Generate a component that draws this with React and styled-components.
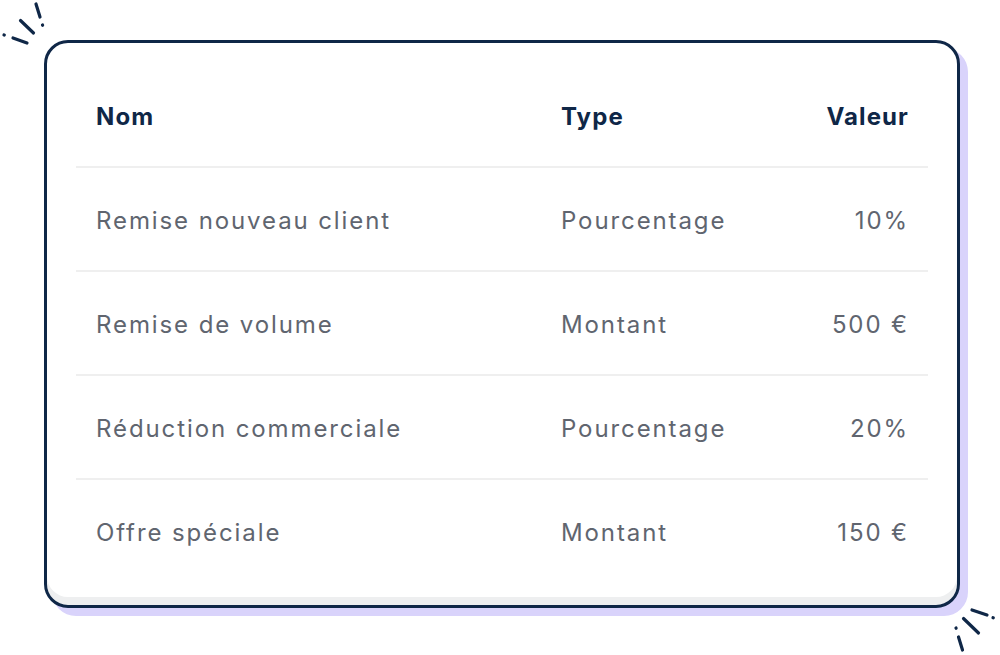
import React from 'react';
import styled, { createGlobalStyle } from 'styled-components';

const GlobalStyle = createGlobalStyle`
  body {
    margin: 0;
    background: #ffffff;
    font-family: Inter, 'Noto Sans', sans-serif;
  }
`;

const Page = styled.div`
  position: relative;
  width: 1000px;
  height: 655px;
  padding: 40px 0 0 44px;
  box-sizing: border-box;
`;

const Card = styled.div`
  width: 916px;
  box-sizing: border-box;
  padding: 21px 29px 23px;
  background: #ffffff;
  border: 3px solid #0f2747;
  border-radius: 24px;
  box-shadow: inset 0 -8px 0 #eeeff0, 8px 8px 0 #d9d3fb;
`;

const Table = styled.div`
  display: grid;
  grid-template-columns: 465px 1fr auto;
`;

const Cell = styled.div`
  padding: 37px ${({ right }) => (right ? 19 : 20)}px 33px 20px;
  font-size: 24px;
  line-height: 32px;
  font-weight: ${({ head }) => (head ? 700 : 400)};
  letter-spacing: ${({ head }) => (head ? '1.1px' : '1.9px')};
  color: ${({ head }) => (head ? '#0f2747' : '#60656f')};
  text-align: ${({ right }) => (right ? 'right' : 'left')};
  border-bottom: ${({ last }) => (last ? 'none' : '2px solid #efefef')};
  white-space: nowrap;
`;

const Spark = styled.svg`
  position: absolute;
  left: ${({ x }) => x}px;
  top: ${({ y }) => y}px;
  overflow: visible;
`;

const rows = [
  ['Remise nouveau client', 'Pourcentage', '10%'],
  ['Remise de volume', 'Montant', '500 €'],
  ['Réduction commerciale', 'Pourcentage', '20%'],
  ['Offre spéciale', 'Montant', '150 €'],
];

const SparkLines = ({ x, y, lines }) => (
  <Spark x={x} y={y} width="50" height="50">
    <g stroke="#0f2747" strokeWidth="3.2" strokeLinecap="round" fill="none">
      {lines.map((d, i) => (
        <path key={i} d={d} />
      ))}
    </g>
  </Spark>
);

const App = () => (
  <>
    <GlobalStyle />
    <Page>
      <SparkLines
        x={0}
        y={0}
        lines={[
          'M36 4 L40 17',
          'M42.5 25 L42.6 25.3',
          'M20.5 20.5 L33.5 33',
          'M4 35 L4.3 35.1',
          'M13 38 L27 43',
        ]}
      />
      <SparkLines
        x={950}
        y={605}
        lines={[
          'M22 5 L37 10',
          'M43 12.7 L43.3 12.8',
          'M13.5 13.5 L28.5 28',
          'M6 23 L6.1 23.3',
          'M8.5 32 L12.5 45',
        ]}
      />
      <Card>
        <Table>
          <Cell head>Nom</Cell>
          <Cell head>Type</Cell>
          <Cell head right>Valeur</Cell>
          {rows.map((r, i) => {
            const last = i === rows.length - 1;
            return (
              <React.Fragment key={r[0]}>
                <Cell last={last}>{r[0]}</Cell>
                <Cell last={last}>{r[1]}</Cell>
                <Cell last={last} right>
                  {r[2]}
                </Cell>
              </React.Fragment>
            );
          })}
        </Table>
      </Card>
    </Page>
  </>
);

export default App;
